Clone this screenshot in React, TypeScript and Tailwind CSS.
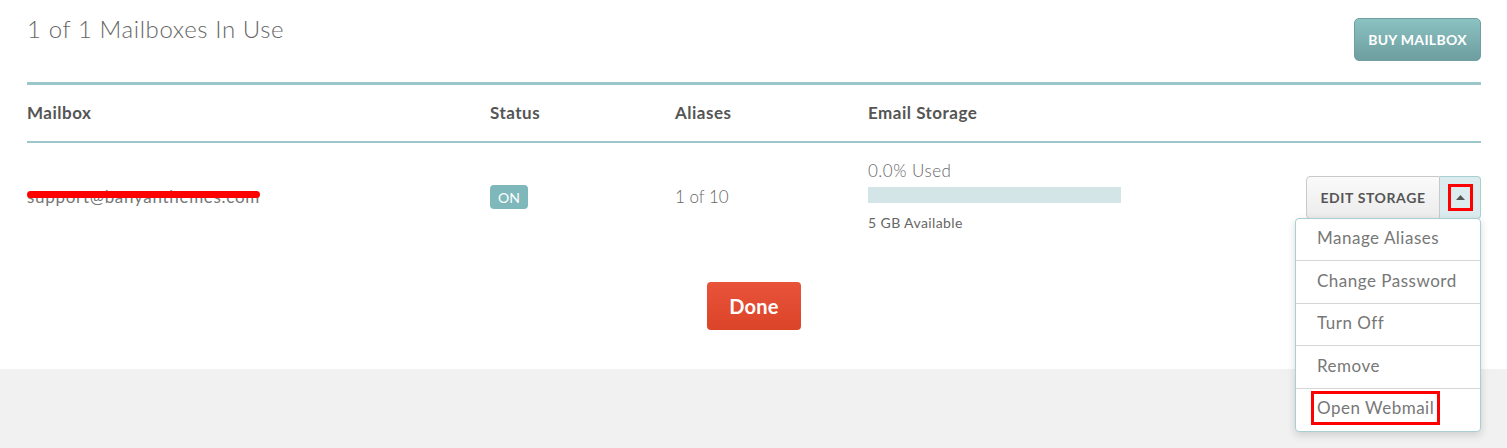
import React from "react";

const font = { fontFamily: "Lato, 'Open Sans', sans-serif" };

export default function App() {
  const items = ["Manage Aliases", "Change Password", "Turn Off", "Remove", "Open Webmail"];
  return (
    <div className="min-h-[448px] w-full bg-[#f1f1f1]" style={font}>
      <div className="bg-white pl-[27px] pr-[26px] pt-[18px] pb-[39px]">
        <div className="flex items-start justify-between">
          <h1 className="mt-[-3px] text-[24px] font-light leading-[28px] tracking-[0.6px] text-[#666]">1 of 1 Mailboxes In Use</h1>
          <button className="h-[43px] w-[127px] rounded-[5px] border border-[#6f9fa0] bg-gradient-to-b from-[#8cc2c2] to-[#6e9e9f] text-[14px] font-bold tracking-[0.3px] text-white">
            BUY MAILBOX
          </button>
        </div>
        <div className="mt-[21px] border-t-[3px] border-[#9bc6ca]" />
        <div className="grid h-[56px] grid-cols-[463px_185px_193px_1fr] items-center text-[17px] font-bold tracking-[0.5px] text-[#555]">
          <div>Mailbox</div>
          <div>Status</div>
          <div>Aliases</div>
          <div>Email Storage</div>
        </div>
        <div className="border-t-2 border-[#9bc6ca]" />
        <div className="grid h-[108px] grid-cols-[463px_185px_193px_1fr_auto] items-center text-[16px] text-[#666]">
          <div className="relative w-fit">
            <span className="text-[17px] tracking-[0.7px] text-[#777]">support@banyanthemes.com</span>
            <span className="absolute left-0 right-0 top-[7px] h-[7px] rounded-full bg-[#ff0000]" />
          </div>
          <div>
            <span className="inline-flex h-[24px] w-[38px] items-center justify-center rounded-[4px] bg-[#7fb8bb] text-[14px] text-white">ON</span>
          </div>
          <div className="text-[17px] font-light text-[#666]">1 of 10</div>
          <div className="flex flex-col">
            <span className="mt-[-3px] text-[17px] font-light leading-[20px] tracking-[0.5px] text-[#666]">0.0% Used</span>
            <div className="mt-[6px] h-[16px] w-[253px] bg-[#d3e5e7]" />
            <span className="mt-[12px] text-[14px] leading-[16px] tracking-[0.4px] text-[#666]">5 GB Available</span>
          </div>
          <div className="relative flex h-[43px]">
            <button className="w-[134px] rounded-l-[4px] border border-[#c9c9c9] bg-gradient-to-b from-[#fafafa] to-[#ececec] text-[14px] font-bold tracking-[0.6px] text-[#555]">
              EDIT STORAGE
            </button>
            <button className="flex w-[41px] items-center justify-center rounded-r-[4px] border border-l-0 border-[#a9cfd2] bg-[#dcecee]">
              <span className="flex h-[27px] w-[25px] items-center justify-center border-[3px] border-[#ff0000]">
                <svg width="9" height="5" viewBox="0 0 9 5"><path d="M0 5 L4.5 0 L9 5 Z" fill="#555" /></svg>
              </span>
            </button>
            <div className="absolute right-0 top-[42px] z-10 w-[186px] rounded-[4px] border border-[#a9cfd2] bg-white shadow-[0_3px_8px_rgba(0,0,0,0.15)]">
              {items.map((t, i) => (
                <div key={t} className={`flex h-[42.5px] items-center px-[14px] pb-[3px] ${i < items.length - 1 ? "border-b border-[#d6d6d6]" : ""}`}>
                  {t === "Open Webmail" ? (
                    <span className="ml-[1px] border-[3px] border-[#ff0000] px-[3px] text-[17px] leading-[28px] tracking-[0.5px] text-[#777]">{t}</span>
                  ) : (
                    <span className="ml-[7px] text-[17px] tracking-[0.5px] text-[#777]">{t}</span>
                  )}
                </div>
              ))}
            </div>
          </div>
        </div>
        <div className="mt-[31px] flex justify-center">
          <button className="h-[48px] w-[94px] rounded-[4px] bg-gradient-to-b from-[#e8533a] to-[#dc4428] text-[20px] font-bold tracking-[0.3px] text-white">
            Done
          </button>
        </div>
      </div>
    </div>
  );
}
